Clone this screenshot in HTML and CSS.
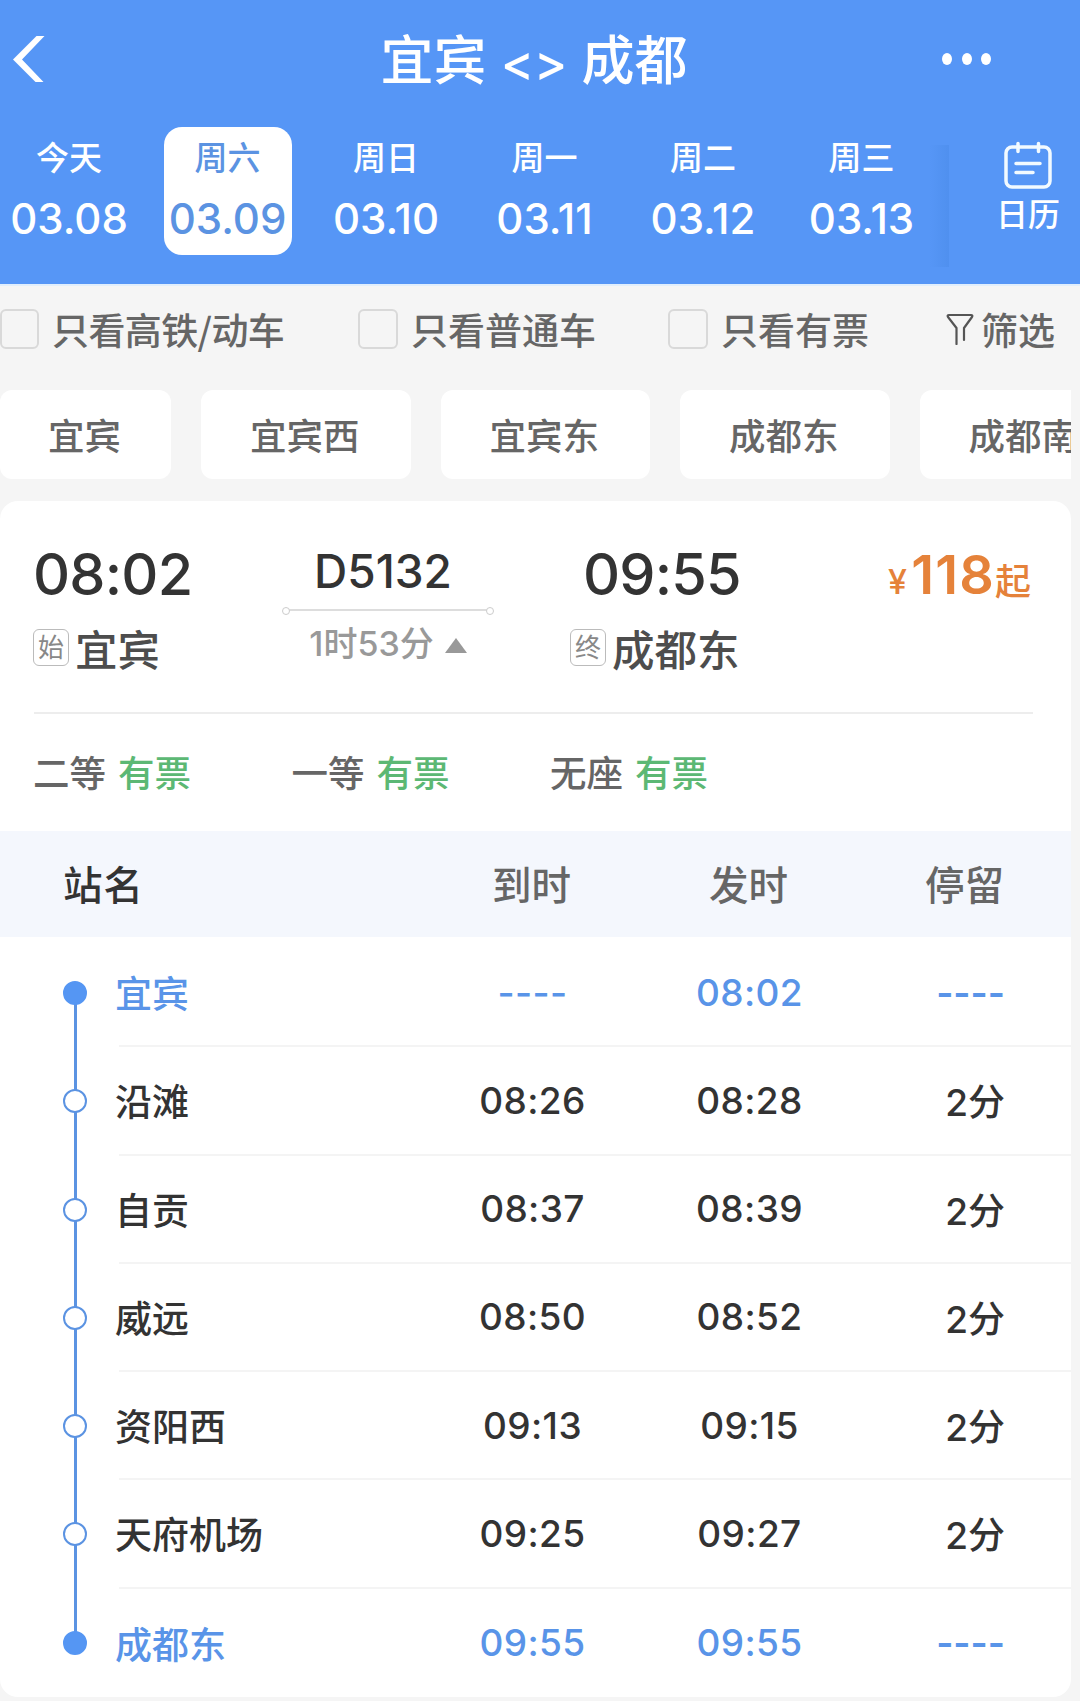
FILE: index.html
```html
<!DOCTYPE html>
<html lang="zh-CN">
<head>
    <meta charset="UTF-8">
    <meta name="viewport" content="width=device-width, initial-scale=1.0">
    <title>宜宾 - 成都</title>
    <link rel="stylesheet" href="styles.css">
</head>
<body>
    <header class="header">
        <div class="title-bar">
            <svg class="back" viewBox="0 0 34 48" width="34" height="48">
                <path d="M24.500 1h8L10 24.500l21.500 22.500h-8L1 24.500z" fill="#fff"/>
            </svg>
            <h1>宜宾 <span>&lt;&gt;</span> 成都</h1>
            <div class="more"><i></i><i></i><i></i></div>
        </div>
        <div class="date-bar">
            <div class="dates">
                <div class="date"><span class="week">今天</span><span class="day">03.08</span></div>
                <div class="date active"><span class="week">周六</span><span class="day">03.09</span></div>
                <div class="date"><span class="week">周日</span><span class="day">03.10</span></div>
                <div class="date"><span class="week">周一</span><span class="day">03.11</span></div>
                <div class="date"><span class="week">周二</span><span class="day">03.12</span></div>
                <div class="date"><span class="week">周三</span><span class="day">03.13</span></div>
            </div>
            <div class="shade"></div>
            <div class="calendar">
                <svg viewBox="0 0 48 48" width="48" height="48" fill="none" stroke="#f2faff" stroke-width="3.500" stroke-linecap="round">
                    <rect x="2" y="6" width="44" height="40" rx="6"/>
                    <path d="M14 2.500v8M34.500 2.500v8M12 22.500h24M12 31.500h17"/>
                </svg>
                <span>日历</span>
            </div>
        </div>
    </header>

    <div class="filters">
        <label class="check"><input type="checkbox">只看高铁/动车</label>
        <label class="check"><input type="checkbox">只看普通车</label>
        <label class="check"><input type="checkbox">只看有票</label>
        <div class="filter-btn">
            <svg viewBox="0 0 28 32" width="28" height="32" fill="none" stroke="#555" stroke-width="2.200" stroke-linejoin="round" stroke-linecap="round">
                <path d="M10.500 31V15L2 4q-1-2 1-2h22q2 0 1 2l-8 11v12"/>
            </svg>
            <span>筛选</span>
        </div>
    </div>

    <div class="stations">
        <button class="station short">宜宾</button>
        <button class="station">宜宾西</button>
        <button class="station">宜宾东</button>
        <button class="station">成都东</button>
        <button class="station">成都南</button>
    </div>

    <div class="card">
        <div class="train">
            <div class="from">
                <div class="time">08:02</div>
                <div class="place"><span class="tag">始</span>宜宾</div>
            </div>
            <div class="trip">
                <div class="number">D5132</div>
                <div class="line"></div>
                <div class="duration">1时53分<i class="arrow"></i></div>
            </div>
            <div class="to">
                <div class="time">09:55</div>
                <div class="place"><span class="tag">终</span>成都东</div>
            </div>
            <div class="price"><small>¥</small>118<em>起</em></div>
        </div>

        <div class="seats">
            <div class="seat">二等<b>有票</b></div>
            <div class="seat">一等<b>有票</b></div>
            <div class="seat">无座<b>有票</b></div>
        </div>

        <div class="stop-head">
            <span>站名</span><span>到时</span><span>发时</span><span>停留</span>
        </div>
        <ul class="stops">
            <li class="stop end"><i class="dot"></i><div class="info"><span>宜宾</span><span>----</span><span>08:02</span><span>----</span></div></li>
            <li class="stop"><i class="dot"></i><div class="info"><span>沿滩</span><span>08:26</span><span>08:28</span><span>2分</span></div></li>
            <li class="stop"><i class="dot"></i><div class="info"><span>自贡</span><span>08:37</span><span>08:39</span><span>2分</span></div></li>
            <li class="stop"><i class="dot"></i><div class="info"><span>威远</span><span>08:50</span><span>08:52</span><span>2分</span></div></li>
            <li class="stop"><i class="dot"></i><div class="info"><span>资阳西</span><span>09:13</span><span>09:15</span><span>2分</span></div></li>
            <li class="stop"><i class="dot"></i><div class="info"><span>天府机场</span><span>09:25</span><span>09:27</span><span>2分</span></div></li>
            <li class="stop end"><i class="dot"></i><div class="info"><span>成都东</span><span>09:55</span><span>09:55</span><span>----</span></div></li>
        </ul>
    </div>
</body>
</html>
```
FILE: styles.css
```css
* {
    box-sizing: border-box;
}
body {
    width: 1080px;
    height: 1701px;
    margin: 0;
    overflow: hidden;
    background: #f5f5f5;
    color: #333;
    font-family: Inter, "Noto Sans CJK SC", sans-serif;
    font-weight: 500;
}
i, em {
    font-style: normal;
}

/* header */
.header {
    height: 286px;
    background: #5696f6;
    border-bottom: 2px solid #e1eefc;
    color: #fff;
}
.title-bar {
    display: grid;
    grid-template-columns: 120px 1fr 140px;
    align-items: center;
    height: 117px;
    padding: 0 0 0 12px;
}
.title-bar h1 {
    margin: 0;
    padding: 6px 4px 0 0;
    font-size: 53px;
    font-weight: 500;
    line-height: 60px;
    text-align: center;
}
.title-bar h1 span {
    font-size: 50px;
}
.more {
    display: flex;
    gap: 9.500px;
    padding-left: 2px;
}
.more i {
    width: 10px;
    height: 12px;
    border-radius: 50%;
    background: #fff;
}
.date-bar {
    display: flex;
    height: 167px;
}
.dates {
    display: flex;
    gap: 30.500px;
    width: 930px;
    padding: 10px 0 0 5px;
}
.date {
    flex: none;
    display: flex;
    flex-direction: column;
    align-items: center;
    width: 128px;
    height: 128px;
    padding-top: 10px;
    border-radius: 18px;
}
.date.active {
    background: #fff;
    color: #5b93e2;
}
.week {
    font-size: 33px;
    line-height: 42px;
}
.day {
    margin-top: 15px;
    font-size: 42px;
    font-weight: 550;
    line-height: 50px;
}
.shade {
    width: 19px;
    height: 122px;
    margin-top: 28px;
    background: linear-gradient(to right, rgba(70, 135, 228, 0), rgba(70, 135, 228, .4));
}
.calendar {
    flex: 1;
    display: flex;
    flex-direction: column;
    align-items: center;
    padding: 24px 0 0 27px;
    font-size: 32px;
}
.calendar span {
    margin-top: 6px;
    line-height: 40px;
}

/* filters */
.filters {
    display: flex;
    align-items: center;
    height: 104px;
    padding-bottom: 18px;
    color: #666;
    font-family: "Noto Sans CJK SC", sans-serif;
    font-size: 37px;
}
.check {
    display: flex;
    align-items: center;
    gap: 13px;
    line-height: 50px;
    white-space: nowrap;
}
.check:nth-child(1) {
    width: 358px;
    letter-spacing: -.600px;
}
.check:nth-child(2) {
    width: 310px;
}
.check:nth-child(3) {
    width: 278px;
}
.check input {
    appearance: none;
    flex: none;
    width: 40px;
    height: 40px;
    margin: 0;
    border: 2px solid #d9d9d9;
    border-radius: 6px;
}
.check:first-child input {
    width: 39px;
}
.filter-btn {
    display: flex;
    align-items: center;
    gap: 7px;
    line-height: 50px;
}

/* stations */
.stations {
    display: flex;
    gap: 30px;
    width: 1071px;
    overflow: hidden;
}
.station {
    flex: none;
    width: 209.500px;
    height: 89px;
    padding: 0 2px 0 0;
    border: none;
    border-radius: 12px;
    background: #fff;
    color: #666;
    font: inherit;
    font-size: 36.500px;
}
.station.short {
    width: 171px;
}

/* train card */
.card {
    width: 1071px;
    height: 1196px;
    margin-top: 22px;
    border-radius: 18px;
    background: #fff;
}
.train {
    display: flex;
    height: 213px;
    margin: 0 38px 0 34px;
    padding-top: 38px;
    border-bottom: 2px solid #ededed;
}
.from {
    width: 247px;
}
.time {
    margin-left: -1px;
    font-size: 57.500px;
    font-weight: 550;
    letter-spacing: -.800px;
    line-height: 70px;
}
.place {
    display: flex;
    align-items: center;
    gap: 6px;
    height: 50px;
    margin: 13px 0 0 -1px;
    color: #4d4d4d;
    font-size: 42.500px;
}
.tag {
    width: 36px;
    height: 37px;
    border: 1.500px solid #bbb;
    border-radius: 6px;
    color: #888;
    font-size: 26px;
    font-weight: 400;
    line-height: 36px;
    text-align: center;
}
.trip {
    width: 214px;
    text-align: center;
}
.number {
    padding-right: 10px;
    font-size: 46px;
    font-weight: 550;
    line-height: 64px;
}
.line {
    position: relative;
    width: 204px;
    height: 2px;
    margin: 6px 0 0 5px;
    background: #ddd;
}
.line::before, .line::after {
    content: "";
    position: absolute;
    top: -2px;
    left: -4px;
    width: 6px;
    height: 6px;
    border: 1.500px solid #ccc;
    border-radius: 50%;
    background: #fff;
}
.line::after {
    left: auto;
    right: -4px;
}
.duration {
    display: flex;
    align-items: center;
    justify-content: center;
    gap: 11px;
    margin-top: 12px;
    color: #999;
    font-size: 34px;
    line-height: 42px;
}
.arrow {
    margin-top: 3px;
    border: 11px solid transparent;
    border-top: 0;
    border-bottom: 15px solid #999;
}
.to {
    flex: none;
    width: 180px;
    margin-left: 76px;
}
.to .time {
    padding-left: 13px;
}
.price {
    flex: 1;
    padding: 3px 2px 0 0;
    color: #e5823a;
    font-size: 54px;
    font-weight: 600;
    letter-spacing: 1.200px;
    line-height: 66px;
    text-align: right;
    white-space: nowrap;
}
.price small {
    margin-right: 3px;
    font-size: 34px;
    font-weight: 500;
}
.price em {
    font-size: 36px;
    font-weight: 500;
    letter-spacing: 0;
    vertical-align: -1px;
}
.seats {
    display: flex;
    height: 117px;
    padding-left: 33px;
    color: #666;
    font-size: 36.500px;
    line-height: 120px;
}
.seat {
    width: 258.500px;
}
.seat b {
    margin-left: 12px;
    color: #5cb874;
    font-weight: 500;
}

/* stop table */
.stop-head, .info {
    display: grid;
    grid-template-columns: 305px 217px 217px 1fr;
    align-items: center;
    text-align: center;
}
.stop-head {
    grid-template-columns: 360px 217px 217px 1fr;
    height: 106px;
    padding: 0 67px 4px 63px;
    background: #f4f7fd;
    color: #666;
    font-size: 39.500px;
}
.stop-head span:first-child {
    color: #333;
    letter-spacing: 1px;
}
.stop-head span:first-child, .info span:first-child {
    text-align: left;
}
.stop-head span:last-child, .info span:last-child {
    text-align: right;
}
.stops {
    margin: 0;
    padding: 2px 0 0;
    list-style: none;
}
.stop {
    position: relative;
    display: flex;
    align-items: center;
    height: 108.250px;
    padding-left: 63px;
}
/* track between two dots */
.stop:not(:last-child)::before {
    content: "";
    position: absolute;
    top: 54px;
    left: 73.500px;
    width: 3px;
    height: 109px;
    background: #5b93e2;
}
.dot {
    position: relative;
    z-index: 1;
    width: 24px;
    height: 24px;
    border: 2.500px solid #5b93e2;
    border-radius: 50%;
    background: #fff;
}
.info {
    flex: 1;
    height: 100%;
    margin-left: 32px;
    padding-right: 66px;
    border-bottom: 2px solid #f4f4f4;
    font-size: 37px;
    font-weight: 550;
    letter-spacing: .400px;
}
.info span:first-child, .info span:last-child {
    font-weight: 500;
    letter-spacing: 0;
}
.info span:first-child {
    margin-left: -4px;
}
.stop:last-child .info {
    border-bottom: none;
}
.end {
    color: #5994e8;
}
.end .info span:last-child {
    font-weight: 600;
}
.end .dot {
    border-color: #5596f3;
    background: #5596f3;
}
```
